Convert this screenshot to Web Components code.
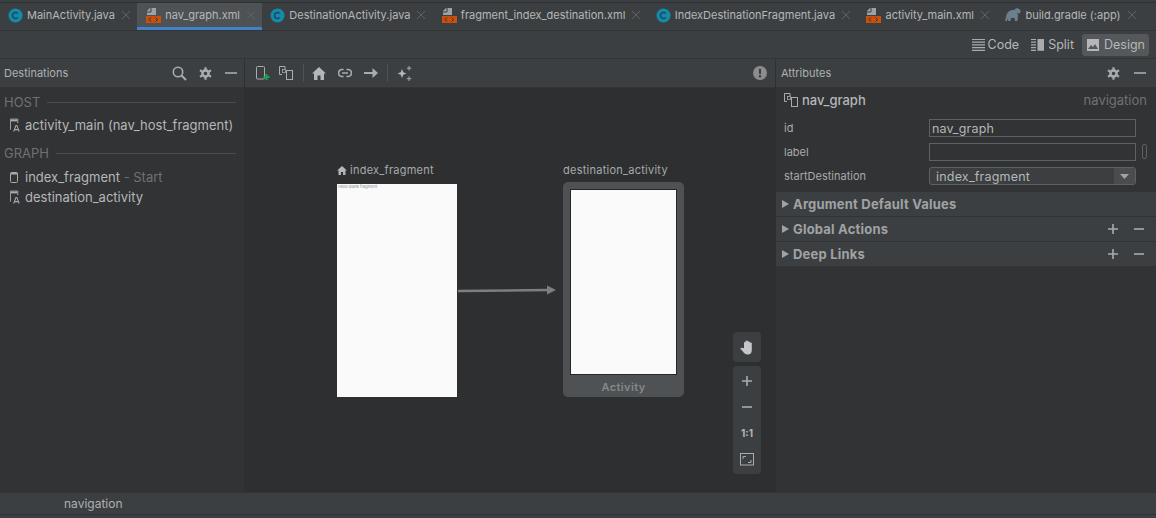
<!DOCTYPE html>
<html>
<head>
<meta charset="utf-8">
<title>nav_graph.xml</title>
<style>
  html, body { margin: 0; height: 518px; overflow: hidden; background: #3c3f41; }
  body { font-family: "Inter", "Liberation Sans", sans-serif; font-size: 13px; color: #bbbbbb; }
</style>
</head>
<body>
<as-app></as-app>
<script>
const ICONS = {
  java: `<svg width="15" height="15" viewBox="0 0 15 15"><circle cx="7.5" cy="7.5" r="7" fill="#128aa8"/><path d="M9.6 5.6a2.9 2.9 0 1 0 0 3.8" fill="none" stroke="#20485a" stroke-width="1.5"/></svg>`,
  xml: `<svg width="16" height="16" viewBox="0 0 16 16"><path d="M5 1h6v7H2V4z" fill="#9da2a6"/><path d="M6 1v4H2" fill="none" stroke="#3c3f41"/><rect x="1" y="9" width="15" height="7" fill="#c8500e"/><path d="M6 10.5l-2 2 2 2M10.500 10.500l2 2-2 2" fill="none" stroke="#2f2f2f"/></svg>`,
  gradle: `<svg width="17" height="14" viewBox="0 0 17 14"><path d="M1 13l1.500-6C3.500 3 7 1.500 10 2l2-1.500c2-.5 4 .5 4.500 2.500.3 1.500-.5 2.500-2 2.500-1 0-1.500-.5-2-1 .3 1 .8 1.500 1.500 2l-.5 6.500h-2.500l-.5-3H7l-.5 3H4.200L4 10l-1 3z" fill="#6c7f8c"/></svg>`,
  close: `<svg width="10" height="10" viewBox="0 0 10 10"><path d="M1 1l8 8M9 1L1 9" stroke="#5f6365" stroke-width="1"/></svg>`,
  code: `<svg width="13" height="13" viewBox="0 0 13 13"><path d="M0 1.500h13M0 4.200h13M0 6.900h13M0 9.600h13M0 12.300h13" stroke="#a9abad" stroke-width="1.200"/></svg>`,
  split: `<svg width="13" height="13" viewBox="0 0 13 13"><path d="M0 1.500h5M0 4.200h5M0 6.900h5M0 9.600h5M0 12.300h5" stroke="#a9abad" stroke-width="1.200"/><rect x="6.500" y="1" width="6.500" height="11.800" fill="#a9abad"/></svg>`,
  design: `<svg width="12" height="12" viewBox="0 0 12 12"><rect width="12" height="12" fill="#b4b6b8"/><path d="M1 10l3-4 2 2 2-3 3 5z" fill="#54585a"/></svg>`,
  search: `<svg width="15" height="15" viewBox="0 0 15 15"><circle cx="6" cy="6" r="4.700" fill="none" stroke="#a9abad" stroke-width="1.600"/><path d="M9.500 9.500l4.500 4.500" stroke="#a9abad" stroke-width="2"/></svg>`,
  gear: `<svg width="13" height="13" viewBox="0 0 13 13"><circle cx="6.500" cy="6.500" r="3.100" fill="none" stroke="#a9abad" stroke-width="2.600"/><path d="M6.500 .2v2.500M6.500 10.300v2.500M1 3.300l2.200 1.300M9.800 8.400l2.200 1.300M1 9.700l2.200-1.300M9.800 4.600L12 3.300" stroke="#a9abad" stroke-width="2.200"/></svg>`,
  minus: `<svg width="12" height="12" viewBox="0 0 12 12"><path d="M0 6h12" stroke="#a9abad" stroke-width="1.600"/></svg>`,
  minusSmall: `<svg width="10" height="10" viewBox="0 0 10 10"><path d="M0 5h10" stroke="#a9abad" stroke-width="1.600"/></svg>`,
  plus: `<svg width="10" height="10" viewBox="0 0 10 10"><path d="M0 5h10M5 0v10" stroke="#a9abad" stroke-width="1.600"/></svg>`,
  newdest: `<svg width="14" height="15" viewBox="0 0 14 15"><rect x=".5" y=".5" width="8" height="12.500" rx="1" fill="none" stroke="#a9abad"/><path d="M10.500 8v6M7.500 11h6" stroke="#0fa958" stroke-width="2"/></svg>`,
  nested: `<svg width="14" height="14" viewBox="0 0 14 14"><path d="M6 3V.5H.5v8H3" fill="none" stroke="#a9abad"/><rect x="3.500" y="3.500" width="3" height="3" fill="none" stroke="#a9abad" stroke-width=".8"/><rect x="7.500" y="4.500" width="6" height="9" fill="none" stroke="#a9abad"/></svg>`,
  home: `<svg width="14" height="13" viewBox="0 0 14 13"><path d="M7 0l7 6.500h-2V13H8.500V8.500h-3V13H2V6.500H0z" fill="#b4b6b8"/></svg>`,
  link: `<svg width="14" height="10" viewBox="0 0 14 10"><path d="M5.500 1.500H4a3.500 3.500 0 0 0 0 7h1.500M8.500 1.500H10a3.500 3.500 0 0 1 0 7H8.500M4 5h6" fill="none" stroke="#a9abad" stroke-width="1.700"/></svg>`,
  arrow: `<svg width="14" height="10" viewBox="0 0 14 10"><path d="M0 5h10" stroke="#a9abad" stroke-width="2"/><path d="M8.500 0L14 5l-5.500 5z" fill="#a9abad"/></svg>`,
  magic: `<svg width="15" height="15" viewBox="0 0 15 15"><path d="M5 3l1.300 3.200L9.500 7.500 6.300 8.800 5 12 3.700 8.800.5 7.500l3.200-1.300z" fill="#b4b6b8"/><path d="M12 0v4.500M9.800 2.200h4.500M12 10.500V15M9.800 12.700h4.500" stroke="#a9abad"/></svg>`,
  warn: `<svg width="14" height="14" viewBox="0 0 14 14"><circle cx="7" cy="7" r="7" fill="#8a8c8e"/><path d="M7 2.800v5.200" stroke="#3c3f41" stroke-width="2"/><circle cx="7" cy="10.300" r="1.200" fill="#3c3f41"/></svg>`,
  activity: `<svg width="12" height="15" viewBox="0 0 12 15"><path d="M.5 12V.5h8V5" fill="none" stroke="#a9abad"/><path d="M1 1h7v2H1z" fill="#a9abad"/><path d="M4 14l2.500-6.500h1L10 14M5 12h4" fill="none" stroke="#a9abad" stroke-width="1.100"/></svg>`,
  fragment: `<svg width="9" height="11" viewBox="0 0 9 11"><rect x=".5" y=".5" width="7" height="10" rx="1" fill="none" stroke="#a9abad"/><path d="M1 1.500h6" stroke="#a9abad" stroke-width="2"/></svg>`,
  hand: `<svg width="15" height="15" viewBox="0 0 15 15"><path d="M4 8V2.500a.8.800 0 0 1 1.500 0V1.200a.8.800 0 0 1 1.600 0v.3a.8.800 0 0 1 1.600 0v1a.8.800 0 0 1 1.600 0V3a.8.800 0 0 1 1.500 0v7c0 3-1.500 4.500-4 4.500S4 13 2.500 11L.3 8.800c.5-1 1.500-1.300 2.500-.6z" fill="#c4c6c8"/></svg>`,
  fit: `<svg width="14" height="13" viewBox="0 0 14 13"><rect x=".5" y=".5" width="13" height="11.500" fill="none" stroke="#a9abad"/><path d="M3 6V3.500h3M11 7v2.500H8" fill="none" stroke="#a9abad"/></svg>`,
  homeSmall: `<svg width="10" height="9" viewBox="0 0 14 13"><path d="M7 0l7 6.500h-2V13H8.500V8.500h-3V13H2V6.500H0z" fill="#b4b6b8"/></svg>`,
  caret: `<svg width="7" height="8" viewBox="0 0 7 8"><path d="M0 0l7 4-7 4z" fill="#a0a2a4"/></svg>`,
  drop: `<svg width="9" height="5" viewBox="0 0 9 5"><path d="M0 0h9L4.500 5z" fill="#a0a2a4"/></svg>`,
};

class AsIcon extends HTMLElement {
  connectedCallback() {
    this.attachShadow({ mode: "open" });
    this.shadowRoot.innerHTML = `<style>:host{display:inline-flex;flex:none;align-items:center;justify-content:center}svg{display:block}</style>${ICONS[this.getAttribute("name")]}`;
  }
}

class AsTab extends HTMLElement {
  connectedCallback() {
    const icon = this.getAttribute("icon");
    this.attachShadow({ mode: "open" });
    this.shadowRoot.innerHTML = `
      <style>
        :host { display: flex; align-items: center; box-sizing: border-box; height: 27px; padding: 0 6.4px 3px 8px; white-space: nowrap; font-size: 11px; color: #b5b7b9; }
        :host([active]) { background: #4e5254; border-bottom: 3px solid #4083c9; padding-bottom: 0; }
        .name { margin: 0 6px 0 4px; }
      </style>
      <as-icon name="${icon}"></as-icon>
      <span class="name"><slot></slot></span>
      <as-icon name="close"></as-icon>`;
  }
}

class AsTabBar extends HTMLElement {
  constructor() {
    super();
    this.attachShadow({ mode: "open" });
    this.shadowRoot.innerHTML = `
      <style>
        :host { display: flex; height: 27px; margin-top: 3px; background: #3c3f41; box-shadow: 0 -1px 0 #2f3133; }
      </style>
      <slot></slot>`;
  }
}

class AsModeBar extends HTMLElement {
  constructor() {
    super();
    this.attachShadow({ mode: "open" });
    this.shadowRoot.innerHTML = `
      <style>
        :host { display: flex; justify-content: flex-end; align-items: center; height: 29px; padding-right: 7px; border-top: 1px solid #323436; border-bottom: 1px solid #323436; font-size: 12.5px; color: #b5b7b9; box-sizing: border-box; }
        span { display: flex; align-items: center; gap: 3px; height: 22px; }
        .code { margin-right: 12px; }
        .split { margin-right: 8px; gap: 4px; }
        .on { background: #54585a; border-radius: 3px; gap: 5px; padding: 0 4px 0 5px; }
      </style>
      <span class="code"><as-icon name="code"></as-icon>Code</span>
      <span class="split"><as-icon name="split"></as-icon>Split</span>
      <span class="on"><as-icon name="design"></as-icon>Design</span>`;
  }
}

class AsHeader extends HTMLElement {
  constructor() {
    super();
    this.attachShadow({ mode: "open" });
    this.shadowRoot.innerHTML = `
      <style>
        :host { display: flex; align-items: center; box-sizing: border-box; height: 29px; background: #3c3f41; border-bottom: 1px solid #323436; font-size: 11px; color: #aeb0b2; }
        .title { flex: 1; }
      </style>
      <span class="title"><slot name="title"></slot></span>
      <slot></slot>`;
  }
}

class AsDestinations extends HTMLElement {
  constructor() {
    super();
    this.attachShadow({ mode: "open" });
    this.shadowRoot.innerHTML = `
      <style>
        :host { display: block; width: 245px; background: #313335; box-sizing: border-box; flex: none; border-right: 1px solid #2d2f31; }
        as-header { padding: 0 7px 0 4px; }
        .gear { margin: 0 13px 0 12px; }
        .group { display: flex; align-items: center; gap: 7px; height: 20px; padding: 0 8px 0 4px; font-size: 13px; color: #6f7274; }
        .group::after { content: ""; flex: 1; height: 1px; background: #4a4d4f; }
        .row { display: flex; align-items: center; gap: 4px; height: 20px; padding-left: 10px; color: #b5b7b9; white-space: nowrap; }
        .row i { font-style: normal; color: #6f7274; }
        .ic { width: 11px; justify-content: flex-start; }
      </style>
      <as-header>
        <span slot="title">Destinations</span>
        <as-icon name="search"></as-icon><as-icon class="gear" name="gear"></as-icon><as-icon name="minus"></as-icon>
      </as-header>
      <div class="group" style="margin-top:4px">HOST</div>
      <div class="row" style="margin-top:3px"><as-icon class="ic" name="activity"></as-icon>activity_main (nav_host_fragment)</div>
      <div class="group" style="margin-top:8px">GRAPH</div>
      <div class="row" style="margin-top:4px"><as-icon class="ic" name="fragment"></as-icon><span>index_fragment <i>- Start</i></span></div>
      <div class="row"><as-icon class="ic" name="activity"></as-icon>destination_activity</div>`;
  }
}

class AsNode extends HTMLElement {
  connectedCallback() {
    const kind = this.getAttribute("kind");
    this.attachShadow({ mode: "open" });
    this.shadowRoot.innerHTML = `
      <style>
        :host { position: absolute; display: block; width: 121px; }
        .label { position: absolute; left: 0; top: ${kind === "activity" ? -19 : -21}px; height: 14px; display: flex; align-items: center; gap: 3px; white-space: nowrap; font-size: 11px; letter-spacing: .25px; color: #a8aaac; }
        .frag { width: 120px; height: 213px; background: #fafafa; font-size: 4px; line-height: 5px; color: #8a8a8a; padding-left: 1px; box-sizing: border-box; }
        .act { box-sizing: border-box; height: 215px; padding: 7px 7px 0; background: #4e5254; border-radius: 5px; }
        .screen { box-sizing: border-box; height: 186px; background: #fafafa; border: 1px solid #25282a; }
        .cap { text-align: center; margin-top: 5px; font-size: 11px; font-weight: 600; letter-spacing: .4px; color: #85888a; }
      </style>
      <div class="label">${kind === "start" ? '<as-icon name="homeSmall"></as-icon>' : ""}${this.getAttribute("name")}</div>
      ${kind === "activity"
        ? `<div class="act"><div class="screen"></div><div class="cap">Activity</div></div>`
        : `<div class="frag">Hello blank fragment</div>`}`;
  }
}

class AsCanvas extends HTMLElement {
  constructor() {
    super();
    this.attachShadow({ mode: "open" });
    this.shadowRoot.innerHTML = `
      <style>
        :host { display: flex; flex-direction: column; flex: 1; min-width: 0; }
        as-header { padding: 0 8px 0 11px; }
        .tools { display: flex; align-items: center; }
        .sep { width: 1px; height: 18px; background: #505355; }
        .board { position: relative; flex: 1; background: #2d2f31; }
        .wire { position: absolute; left: 212px; top: 196px; }
        .zoom { position: absolute; right: 14px; top: 244px; width: 28px; display: flex; flex-direction: column; gap: 4px; }
        .box { background: #3c3f41; border-radius: 4px; display: flex; flex-direction: column; }
        .stack { padding: 2px 0; }
        .box span { display: flex; align-items: center; justify-content: center; height: 26px; }
        .ratio { font-size: 10px; font-weight: 700; color: #b4b6b8; }
      </style>
      <as-header>
        <div class="tools" slot="title">
          <as-icon name="newdest"></as-icon>
          <as-icon name="nested" style="margin:0 10px 0 9px"></as-icon>
          <span class="sep"></span>
          <as-icon name="home" style="margin:0 12px 0 8px"></as-icon>
          <as-icon name="link" style="margin-right:12px"></as-icon>
          <as-icon name="arrow" style="margin-right:9px"></as-icon>
          <span class="sep"></span>
          <as-icon name="magic" style="margin-left:9px"></as-icon>
        </div>
        <as-icon name="warn"></as-icon>
      </as-header>
      <div class="board">
        <as-node kind="start" name="index_fragment" style="left:92px;top:96px"></as-node>
        <as-node kind="activity" name="destination_activity" style="left:318px;top:94px"></as-node>
        <svg class="wire" width="100" height="12" viewBox="0 0 100 12"><path d="M1 7L92 6" stroke="#7c7e80" stroke-width="2.500"/><path d="M90 1.500L99 6l-9 4.500z" fill="#7c7e80"/></svg>
        <div class="zoom">
          <div class="box" style="height:30px"><span style="height:30px"><as-icon name="hand"></as-icon></span></div>
          <div class="box stack">
            <span><as-icon name="plus"></as-icon></span>
            <span><as-icon name="minusSmall"></as-icon></span>
            <span class="ratio">1:1</span>
            <span><as-icon name="fit"></as-icon></span>
          </div>
        </div>
      </div>`;
  }
}

class AsField extends HTMLElement {
  connectedCallback() {
    const combo = this.hasAttribute("combo");
    this.attachShadow({ mode: "open" });
    this.shadowRoot.innerHTML = `
      <style>
        :host { display: flex; align-items: center; height: 24px; padding: 0 8px; font-size: 11px; color: #a8aaac; position: relative; }
        label { width: 145px; flex: none; }
        .input { box-sizing: border-box; width: 207px; height: 18px; border: 1px solid #5e6163; display: flex; align-items: center; font-size: 12.5px; letter-spacing: .2px; color: #b5b7b9; padding-left: 2px; background: #313335; }
        .combo { border-radius: 3px; background: #3c3f41; padding-left: 6px; justify-content: space-between; padding-right: 0; }
        .combo b { display: flex; align-items: center; justify-content: center; width: 21px; height: 100%; background: #4a4d4f; border-radius: 0 3px 3px 0; }
        .mark { position: absolute; left: 366px; top: 4px; box-sizing: border-box; width: 5px; height: 15px; border: 1px solid #5e6163; border-radius: 2px; }
      </style>
      <label>${this.getAttribute("label")}</label>
      <div class="input ${combo ? "combo" : ""}"><slot></slot>${combo ? '<b><as-icon name="drop"></as-icon></b>' : ""}</div>
      ${this.hasAttribute("mark") ? '<span class="mark"></span>' : ""}`;
  }
}

class AsSection extends HTMLElement {
  connectedCallback() {
    this.attachShadow({ mode: "open" });
    this.shadowRoot.innerHTML = `
      <style>
        :host { display: flex; align-items: center; box-sizing: border-box; height: 25px; padding: 0 12px 0 6px; background: #3c3f41; border-bottom: 1px solid #313335; font-size: 13px; font-weight: 700; letter-spacing: .2px; color: #a0a2a4; }
        .t { flex: 1; margin-left: 4px; }
        .t ~ as-icon + as-icon { margin-left: 16px; }
      </style>
      <as-icon name="caret"></as-icon>
      <span class="t">${this.getAttribute("title")}</span>
      ${this.hasAttribute("actions") ? '<as-icon name="plus"></as-icon><as-icon name="minusSmall"></as-icon>' : ""}`;
  }
}

class AsAttributes extends HTMLElement {
  constructor() {
    super();
    this.attachShadow({ mode: "open" });
    this.shadowRoot.innerHTML = `
      <style>
        :host { display: block; width: 381px; flex: none; background: #313335; border-left: 1px solid #2d2f31; box-sizing: border-box; }
        as-header { padding: 0 10px 0 5px; }
        as-header as-icon + as-icon { margin-left: 14px; }
        .head { display: flex; align-items: center; height: 24px; padding: 0 9px 0 8px; gap: 4px; font-size: 13px; font-weight: 500; color: #b5b7b9; }
        .head i { margin-left: auto; font-style: normal; font-weight: 400; font-size: 13px; color: #6f7274; }
        .fields { margin: 4px 0; }
      </style>
      <as-header>
        <span slot="title">Attributes</span>
        <as-icon name="gear"></as-icon><as-icon name="minus"></as-icon>
      </as-header>
      <div class="head"><as-icon name="nested"></as-icon>nav_graph<i>navigation</i></div>
      <div class="fields">
        <as-field label="id">nav_graph</as-field>
        <as-field label="label" mark></as-field>
        <as-field label="startDestination" combo>index_fragment</as-field>
      </div>
      <as-section title="Argument Default Values"></as-section>
      <as-section title="Global Actions" actions></as-section>
      <as-section title="Deep Links" actions></as-section>`;
  }
}

class AsStatus extends HTMLElement {
  constructor() {
    super();
    this.attachShadow({ mode: "open" });
    this.shadowRoot.innerHTML = `
      <style>
        :host { display: flex; align-items: center; box-sizing: border-box; height: 23px; padding-left: 64px; background: #3c3f41; border-top: 1px solid #323436; border-bottom: 1px solid #2f3133; font-size: 12px; color: #aeb0b2; }
      </style>
      <slot></slot>`;
  }
}

class AsApp extends HTMLElement {
  constructor() {
    super();
    this.attachShadow({ mode: "open" });
    this.shadowRoot.innerHTML = `
      <style>
        :host { display: flex; flex-direction: column; height: 518px; background: #3c3f41; }
        .main { display: flex; height: 433px; }
      </style>
      <as-tab-bar>
        <as-tab icon="java">MainActivity.java</as-tab>
        <as-tab icon="xml" active>nav_graph.xml</as-tab>
        <as-tab icon="java">DestinationActivity.java</as-tab>
        <as-tab icon="xml">fragment_index_destination.xml</as-tab>
        <as-tab icon="java">IndexDestinationFragment.java</as-tab>
        <as-tab icon="xml">activity_main.xml</as-tab>
        <as-tab icon="gradle">build.gradle (:app)</as-tab>
      </as-tab-bar>
      <as-mode-bar></as-mode-bar>
      <div class="main">
        <as-destinations></as-destinations>
        <as-canvas></as-canvas>
        <as-attributes></as-attributes>
      </div>
      <as-status>navigation</as-status>`;
  }
}

customElements.define("as-icon", AsIcon);
customElements.define("as-tab", AsTab);
customElements.define("as-tab-bar", AsTabBar);
customElements.define("as-mode-bar", AsModeBar);
customElements.define("as-header", AsHeader);
customElements.define("as-destinations", AsDestinations);
customElements.define("as-node", AsNode);
customElements.define("as-canvas", AsCanvas);
customElements.define("as-field", AsField);
customElements.define("as-section", AsSection);
customElements.define("as-attributes", AsAttributes);
customElements.define("as-status", AsStatus);
customElements.define("as-app", AsApp);
</script>
</body>
</html>
